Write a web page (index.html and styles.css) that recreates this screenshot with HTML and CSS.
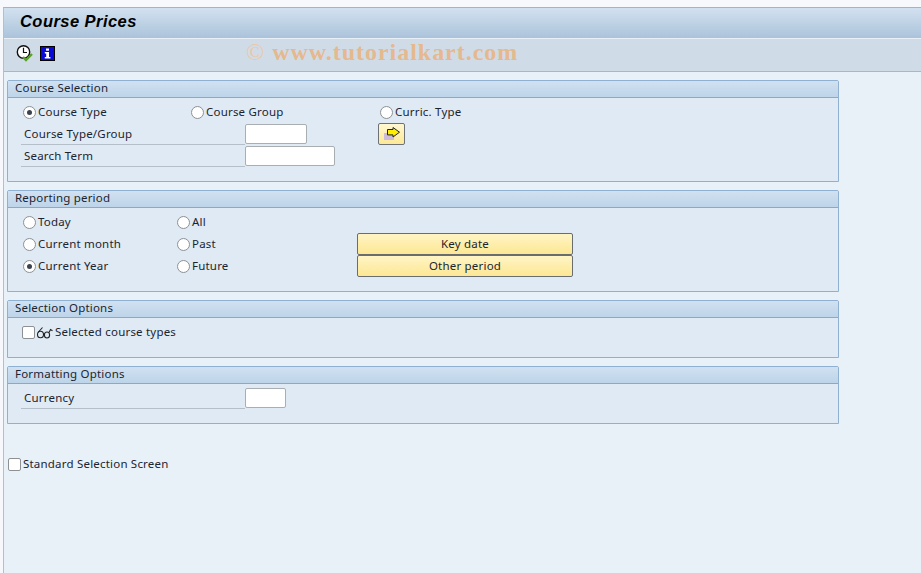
FILE: index.html
```html
<!DOCTYPE html>
<html lang="en">
<head>
<meta charset="utf-8">
<title>Course Prices</title>
<link rel="stylesheet" href="styles.css">
</head>
<body>
<div class="window">
  <header class="titlebar"><h1>Course Prices</h1></header>
  <div class="toolbar">
    <svg class="icon" viewBox="0 0 17 17" width="17" height="17">
      <circle cx="7.500" cy="7" r="6.200" fill="#fff" stroke="#111" stroke-width="1.400"/>
      <path d="M7.500 2.800V7.500H11" fill="none" stroke="#111" stroke-width="1.200"/>
      <path d="M7 12l3 3 6-6" fill="none" stroke="#5aa02c" stroke-width="2.400"/>
    </svg>
    <svg class="icon" viewBox="0 0 15 15" width="15" height="15">
      <rect x=".5" y=".5" width="14" height="14" fill="#0a0ad8" stroke="#000"/>
      <rect x="6" y="2.500" width="3" height="2.200" fill="#fff"/>
      <path d="M4.800 6H9V11H10.400V12.600H4.800V11H6.200V7.500H4.800Z" fill="#fff"/>
    </svg>
    <span class="watermark"><span class="copy">©</span> www.tutorialkart.com</span>
  </div>
  <main class="content">
    <section class="group group-tall">
      <h2>Course Selection</h2>
      <div class="body">
        <div class="row">
          <label class="opt w168"><i class="radio on"></i><span class="t">Course Type</span></label>
          <label class="opt w189"><i class="radio"></i><span class="t">Course Group</span></label>
          <label class="opt"><i class="radio"></i><span class="t">Curric. Type</span></label>
        </div>
        <div class="row">
          <span class="field">Course Type/Group</span>
          <i class="input w62"></i>
          <button class="btn-icon" type="button" aria-label="Go">
            <svg viewBox="0 0 16 14" width="16" height="14">
              <rect x="0" y="6" width="10" height="7" fill="#cdbbdc"/>
              <path d="M3.500 2.500H9V.5L15.500 5.200L9 10V7.900H3.500Z" fill="#ffee00" stroke="#222" stroke-width="1"/>
            </svg>
          </button>
        </div>
        <div class="row">
          <span class="field">Search Term</span>
          <i class="input w90"></i>
        </div>
      </div>
    </section>
    <section class="group group-tall">
      <h2>Reporting period</h2>
      <div class="body">
        <div class="row">
          <label class="opt w154"><i class="radio"></i><span class="t">Today</span></label>
          <label class="opt"><i class="radio"></i><span class="t">All</span></label>
        </div>
        <div class="row">
          <label class="opt w154"><i class="radio"></i><span class="t">Current month</span></label>
          <label class="opt w180"><i class="radio"></i><span class="t">Past</span></label>
          <button class="btn" type="button">Key date</button>
        </div>
        <div class="row">
          <label class="opt w154"><i class="radio on"></i><span class="t">Current Year</span></label>
          <label class="opt w180"><i class="radio"></i><span class="t">Future</span></label>
          <button class="btn" type="button">Other period</button>
        </div>
      </div>
    </section>
    <section class="group group-small">
      <h2>Selection Options</h2>
      <div class="body body-check">
        <div class="row">
          <label class="opt"><i class="check"></i>
            <svg class="glasses" viewBox="0 0 17 13" width="17" height="13">
              <ellipse cx="4.500" cy="8.500" rx="3" ry="3.300" fill="none" stroke="#222" stroke-width="1.100"/>
              <ellipse cx="11" cy="9" rx="2.600" ry="3" fill="none" stroke="#222" stroke-width="1.100"/>
              <path d="M2 6.500L6.500 1.500M7.300 7.500L8.500 8M13 6.500L14.500 3.500L16.500 4.800" fill="none" stroke="#222" stroke-width="1.100"/>
            </svg><span class="t">Selected course types</span></label>
        </div>
      </div>
    </section>
    <section class="group group-small">
      <h2>Formatting Options</h2>
      <div class="body">
        <div class="row">
          <span class="field">Currency</span>
          <i class="input w41"></i>
        </div>
      </div>
    </section>
    <label class="opt standard"><i class="check"></i><span class="t">Standard Selection Screen</span></label>
  </main>
</div>
</body>
</html>
```
FILE: styles.css
```css
* { box-sizing: border-box; }
html, body { margin: 0; height: 100%; }
body {
  background: #f6f8fc;
  font-family: "Noto Sans", "DejaVu Sans", sans-serif;
  font-size: 11.5px;
  letter-spacing: .2px;
  color: #1b2530;
  overflow: hidden;
}
.window {
  margin: 7px 0 0 3px;
  height: 566px;
  border-left: 1px solid #b4bfca;
  border-top: 1px solid #a9b2c0;
  display: flex;
  flex-direction: column;
}
.titlebar {
  height: 30px;
  flex: none;
  padding: 0 0 3px 16px;
  background: linear-gradient(#d2e1f0, #abc3da);
  display: flex;
  align-items: center;
}
.titlebar h1 {
  margin: 0;
  font-family: "Liberation Sans", sans-serif;
  font-size: 16.500px;
  font-style: italic;
  font-weight: bold;
  letter-spacing: .45px;
  color: #000;
}
.toolbar {
  height: 34px;
  flex: none;
  padding: 0 0 4px 12px;
  border-top: 1px solid #e8eff6;
  border-bottom: 1px solid #a9b6c6;
  background: #cfdce7;
  display: flex;
  align-items: center;
  gap: 7px;
}
.icon { display: block; flex: none; }
.watermark {
  margin: 0 0 2px 184px;
  font-family: "Liberation Serif", serif;
  font-size: 24px;
  font-weight: bold;
  letter-spacing: .97px;
  color: #e6b88e;
  white-space: nowrap;
}
.copy { font-weight: normal; color: #ecc7a6; }
.content {
  flex: 1;
  background: #e8f0f8;
  padding: 8px 0 0 3px;
}
.group {
  width: 832px;
  margin-bottom: 8px;
  background: #dfeaf4;
  border: 1px solid #8fb0d0;
  border-radius: 2px 2px 0 0;
}
.group-tall { height: 102px; }
.group-small { height: 58px; }
.group h2 {
  margin: 0;
  height: 17px;
  padding-left: 7px;
  font-size: 11.500px;
  font-weight: normal;
  line-height: 14px;
  background: linear-gradient(#d0e1f1, #bed4e9);
  border-bottom: 1px solid #8aa9c8;
}
.body { padding: 3px 0 0 15px; }
.body-check { padding-left: 14px; }
.row {
  height: 22px;
  display: flex;
  align-items: center;
}
.opt {
  display: flex;
  align-items: center;
  gap: 2px;
  white-space: nowrap;
}
.t { margin-bottom: 2px; }
.w154 { width: 154px; }
.w168 { width: 168px; }
.w180 { width: 180px; }
.w189 { width: 189px; }
.radio {
  width: 13px;
  height: 13px;
  flex: none;
  border: 1px solid #8d9194;
  border-radius: 50%;
  background: #fff;
  display: flex;
  align-items: center;
  justify-content: center;
}
.radio.on::after {
  content: "";
  width: 5px;
  height: 5px;
  border-radius: 50%;
  background: #3b4350;
}
.check {
  width: 13px;
  height: 13px;
  flex: none;
  border: 1px solid #8d9194;
  border-radius: 2px;
  background: #fff;
}
.field {
  width: 224px;
  height: 22px;
  margin-left: -2px;
  padding-left: 3px;
  line-height: 21px;
  border-bottom: 1px solid #b4bfc9;
  flex: none;
}
.input {
  display: block;
  height: 20px;
  flex: none;
  border: 1px solid #a9aeb2;
  border-radius: 2px;
  background: #fff;
}
.w41 { width: 41px; }
.w62 { width: 62px; }
.w90 { width: 90px; }
.btn-icon {
  width: 27px;
  height: 22px;
  margin-left: 71px;
  padding: 0;
  flex: none;
  display: flex;
  align-items: center;
  justify-content: center;
  border: 1px solid #6f7275;
  border-radius: 2px;
  background: linear-gradient(#fff8d2, #fde896);
}
.btn {
  width: 216px;
  height: 22px;
  padding: 0 0 1px;
  flex: none;
  font: inherit;
  letter-spacing: inherit;
  color: inherit;
  border: 1px solid #6a6d70;
  border-radius: 2px;
  background: linear-gradient(#fff5c4, #fde794);
}
.glasses { display: block; flex: none; margin-left: -1px; }
.standard { margin: 32px 0 0 1px; }
```
